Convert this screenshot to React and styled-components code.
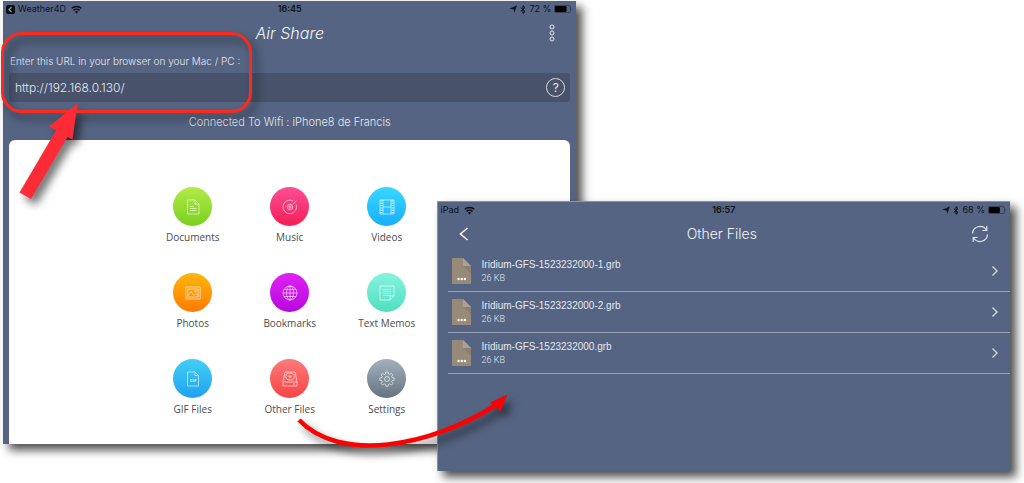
import React, { useState } from 'react';
import styled, { createGlobalStyle } from 'styled-components';

const files = [
  { name: 'Iridium-GFS-1523232000-1.grb', size: '26 KB' },
  { name: 'Iridium-GFS-1523232000-2.grb', size: '26 KB' },
  { name: 'Iridium-GFS-1523232000.grb', size: '26 KB' },
];

const DocumentIcon = () => (
  <Glyph viewBox="0 0 16 16">
    <path d="M2.500 1h7.500l4 4v10h-11.500z" />
    <path d="M10 1v4h4M5 7.500h3.500M5 9.500h6.500M5 11.500h6.500" />
  </Glyph>
);

const MusicIcon = () => (
  <Glyph viewBox="0 0 16 16">
    <path d="M14.200 5.500A6.800 6.800 0 1 1 11.200 2" />
    <circle cx="8" cy="8" r="2.800" />
    <circle cx="8" cy="8" r="1.200" />
    <path d="M11 5L14.500 1.800" />
  </Glyph>
);

const VideoIcon = () => (
  <Glyph viewBox="0 0 16 16">
    <path d="M1 1h14v14h-14zM4 1v14M12 1v14M4 8h8" />
    <path d="M2.500 1.500v13M13.500 1.500v13" strokeWidth="2" strokeDasharray="1 1.300" />
  </Glyph>
);

const PhotoIcon = () => (
  <Glyph viewBox="0 0 16 16">
    <path d="M.8 2h14.400v12h-14.400zM2.800 4h10.400v8h-10.400z" />
    <path d="M3 10.500l3-4 3 4 2-2 2 2" />
    <circle cx="10.500" cy="6" r=".8" />
  </Glyph>
);

const GlobeIcon = () => (
  <Glyph viewBox="0 0 16 16">
    <circle cx="8" cy="8" r="7" />
    <ellipse cx="8" cy="8" rx="3.500" ry="7" />
    <path d="M8 1v14M1 8h14M2 4.500h12M2 11.500h12" />
  </Glyph>
);

const MemoIcon = () => (
  <Glyph viewBox="0 0 16 16">
    <path d="M1 1h14v10l-4 4h-10zM15 11h-4v4" />
    <path d="M4 4.500h8M4 6.500h8M4 8.500h8M4 10.500h8" />
  </Glyph>
);

const GifIcon = () => (
  <Glyph viewBox="0 0 16 16">
    <path d="M2.500 1h7.500l3.500 3.500v10.500h-11zM10 1v3.500h3.500" />
    <path d="M7.500 8.500H5.700v2h1.600V9.600M8.700 8.200V10.900M10 10.900V8.500h1.600M10 9.700h1.300" />
  </Glyph>
);

const DriveIcon = () => (
  <Glyph viewBox="0 0 16 16">
    <path d="M3 1h10l2 9.500v4.500h-14v-4.500zM1 11h14M11 13h2" />
    <ellipse cx="8" cy="5.500" rx="4.200" ry="3.500" />
    <path d="M6.500 5h3l-1.500 1.500z" />
  </Glyph>
);

const GearIcon = () => (
  <Glyph viewBox="0 0 16 16">
    <circle cx="8" cy="8" r="2.500" />
    <path d="M6.900 1h2.200l.4 2 1.200.5 1.700-1.200 1.500 1.500-1.200 1.700.5 1.200 2 .3v2.200l-2 .4-.5 1.200 1.200 1.700-1.500 1.500-1.700-1.200-1.200.5-.4 2H6.900l-.4-2-1.200-.5-1.700 1.200-1.500-1.500 1.200-1.700-.5-1.200-2-.4V7l2-.3.5-1.200-1.200-1.700 1.500-1.500 1.700 1.200 1.200-.5z" />
  </Glyph>
);

const tiles = [
  { label: 'Documents', Icon: DocumentIcon, from: '#b4ea48', to: '#78d01f' },
  { label: 'Music', Icon: MusicIcon, from: '#fd4d96', to: '#f51f55' },
  { label: 'Videos', Icon: VideoIcon, from: '#38d8ff', to: '#18aefc' },
  { label: 'Photos', Icon: PhotoIcon, from: '#ffb70a', to: '#ff7a02' },
  { label: 'Bookmarks', Icon: GlobeIcon, from: '#df22f4', to: '#b808dc' },
  { label: 'Text Memos', Icon: MemoIcon, from: '#86f3df', to: '#4fdfbe' },
  { label: 'GIF Files', Icon: GifIcon, from: '#43cff8', to: '#1fa0f0' },
  { label: 'Other Files', Icon: DriveIcon, from: '#fd7a7a', to: '#f94444' },
  { label: 'Settings', Icon: GearIcon, from: '#a3b0bd', to: '#667482' },
];

function StatusBar({ carrier, backTo, time, battery }) {
  return (
    <Status>
      <StatusSide>
        {backTo && (
          <svg width="9" height="9" viewBox="0 0 9 9">
            <rect width="9" height="9" rx="2" fill="#0a0c10" />
            <path d="M5.500 2L3 4.500 5.500 7" fill="none" stroke="#8e9ab5" strokeWidth="1.200" />
          </svg>
        )}
        <Carrier>{backTo || carrier}</Carrier>
        <svg width="11" height="9" viewBox="0 0 11 9" fill="none" stroke="#0a0c10" strokeWidth="1.500">
          <path d="M.7 3.300a7 7 0 0 1 9.600 0M2.500 5.400a4.400 4.400 0 0 1 6 0" />
          <path d="M5.500 8.500L3.900 6.800a2.300 2.300 0 0 1 3.200 0z" fill="#0a0c10" stroke="none" />
        </svg>
      </StatusSide>
      <Clock>{time}</Clock>
      <StatusSide $end>
        <svg width="8" height="8" viewBox="0 0 8 8">
          <path d="M8 .3L5.400 7.800 4.500 4.400.3 3.800z" fill="#141822" />
        </svg>
        <svg width="6" height="9" viewBox="0 0 6 9" fill="none" stroke="#0a0c10">
          <path d="M.8 2.500l4.200 4L3 8.300V.7l2 1.800-4.200 4" />
        </svg>
        <span>{battery} %</span>
        <svg width="19" height="8" viewBox="0 0 19 8">
          <rect x=".5" y=".5" width="16" height="7" rx="1.500" fill="none" stroke="#39445a" />
          <rect x="1" y="1" width={(battery / 100) * 16} height="6" rx="1" fill="#000" />
          <path d="M17.500 2.500q1.500 1.500 0 3z" fill="#39445a" />
        </svg>
      </StatusSide>
    </Status>
  );
}

function AirShare() {
  const [url, setUrl] = useState('http://192.168.0.130/');

  return (
    <ShareWindow>
      <StatusBar backTo="Weather4D" time="16:45" battery={72} />
      <NavBar>
        <span />
        <Title $italic>Air Share</Title>
        <IconButton aria-label="Menu">
          <svg width="8" height="18" viewBox="0 0 8 18" fill="none" stroke="#e2e6ee">
            <circle cx="4" cy="3" r="2" />
            <circle cx="4" cy="9" r="2" />
            <circle cx="4" cy="15" r="2" />
          </svg>
        </IconButton>
      </NavBar>
      <UrlLabel htmlFor="url">Enter this URL in your browser on your Mac / PC :</UrlLabel>
      <UrlField>
        <UrlInput id="url" value={url} onChange={(e) => setUrl(e.target.value)} />
        <HelpButton aria-label="Help">?</HelpButton>
      </UrlField>
      <WifiName>Connected To Wifi : iPhone8 de Francis</WifiName>
      <Panel>
        {tiles.map(({ label, Icon, from, to }) => (
          <Tile key={label}>
            <Disc $from={from} $to={to}>
              <Icon />
            </Disc>
            {label}
          </Tile>
        ))}
      </Panel>
    </ShareWindow>
  );
}

function OtherFiles() {
  return (
    <FilesWindow>
      <StatusBar carrier="iPad" time="16:57" battery={68} />
      <NavBar>
        <IconButton aria-label="Back">
          <svg width="10" height="14" viewBox="0 0 10 14" fill="none" stroke="#fff" strokeWidth="1.500">
            <path d="M8.500 1L1.500 7l7 6" />
          </svg>
        </IconButton>
        <Title>Other Files</Title>
        <IconButton aria-label="Refresh">
          <svg width="18" height="18" viewBox="0 0 18 18" fill="none" stroke="#e2e6ee" strokeWidth="1.200">
            <path d="M1.500 8.500A7.500 7.500 0 0 1 15.300 5M16.500 9.500A7.500 7.500 0 0 1 2.700 13" />
            <path d="M15.800 1v4.500h-4.500M2.200 17v-4.500h4.500" />
          </svg>
        </IconButton>
      </NavBar>
      <FileList>
        {files.map(({ name, size }) => (
          <FileItem key={name}>
            <FileRow>
              <svg width="20" height="26" viewBox="0 0 20 26">
                <path d="M0 0h11l8 8v18H0z" fill="#988a79" />
                <path d="M11 8h8v8z" fill="#8b7f72" />
                <path d="M11 0l8 8h-8z" fill="#aca095" />
                <g fill="#fff">
                  <circle cx="6.500" cy="21" r="1.200" />
                  <circle cx="9.700" cy="21" r="1.200" />
                  <circle cx="12.900" cy="21" r="1.200" />
                </g>
              </svg>
              <FileText>
                <FileName>{name}</FileName>
                <FileSize>{size}</FileSize>
              </FileText>
              <svg width="8" height="12" viewBox="0 0 8 12" fill="none" stroke="#d3d6dc" strokeWidth="1.400">
                <path d="M1.500 1.500L6 6l-4.500 4.500" />
              </svg>
            </FileRow>
          </FileItem>
        ))}
      </FileList>
    </FilesWindow>
  );
}

function App() {
  return (
    <Desktop>
      <GlobalStyle />
      <AirShare />
      <OtherFiles />
      <Annotations width="1024" height="483" viewBox="0 0 1024 483">
        <rect x="2.500" y="33.500" width="248" height="78" rx="19" fill="none" stroke="#fb2a1c" strokeWidth="3" />
        <path d="M77.500 103.500L49 126.500l7 4L19.500 192.500l11.500 6.500L67.500 137l5 2.500z" fill="#fd2b35" />
        <path d="M299 420C340 463 430 447 496 405" fill="none" stroke="#f00" strokeWidth="4.500" />
        <path d="M507.500 394.500l-17.500 8 10.500 9z" fill="#f00" />
      </Annotations>
    </Desktop>
  );
}

const GlobalStyle = createGlobalStyle`
  * {
    box-sizing: border-box;
  }
  body {
    margin: 0;
    background: #fff;
    font-family: Inter, 'Liberation Sans', sans-serif;
    overflow: hidden;
  }
  button, input {
    border: 0;
    padding: 0;
    background: none;
    color: inherit;
    font: inherit;
  }
  svg {
    display: block;
    flex: none;
  }
`;

const Desktop = styled.main`
  position: relative;
  min-height: 100vh;
  padding: 1px 3px;
`;

const Window = styled.section`
  width: 56vw;
  background: #556482;
  color: #e4e8ef;
  font-weight: 300;
  box-shadow: 6px 6px 9px rgba(0, 0, 0, 0.7);
`;

const ShareWindow = styled(Window)`
  padding: 0 6px;
`;

const FilesWindow = styled(Window)`
  position: absolute;
  top: 201px;
  right: 14px;
  padding-bottom: 97px;
  border-top: 1px solid #8792ab;
  border-left: 1px solid #8792ab;
`;

const Annotations = styled.svg`
  position: absolute;
  top: 0;
  left: 0;
  pointer-events: none;
  filter: drop-shadow(5px 6px 4px rgba(0, 0, 0, 0.55));
`;

const Status = styled.div`
  display: grid;
  grid-template-columns: 1fr auto 1fr;
  align-items: center;
  height: 16px;
  padding: 0 3px;
  color: #0f131b;
  font-size: 9px;
  font-weight: 400;
  line-height: 16px;

  ${ShareWindow} & {
    margin: 0 -6px;
  }
`;

const StatusSide = styled.div`
  display: flex;
  align-items: center;
  justify-content: ${({ $end }) => ($end ? 'flex-end' : 'flex-start')};
  gap: 3px;
`;

const Carrier = styled.span`
  margin-right: 2px;
`;

const Clock = styled.span`
  font-weight: 600;
`;

const NavBar = styled.header`
  display: grid;
  grid-template-columns: 24px 1fr 24px;
  align-items: center;
  height: 32px;
  padding: 0 6px;

  ${FilesWindow} & {
    padding: 0 18px 0 14px;
  }
`;

const Title = styled.h1`
  margin: 0;
  font-size: ${({ $italic }) => ($italic ? 16 : 14)}px;
  font-weight: 300;
  font-style: ${({ $italic }) => ($italic ? 'italic' : 'normal')};
  line-height: 24px;
  text-align: center;
  color: #f2f4f8;
`;

const IconButton = styled.button`
  display: flex;
  align-items: center;
  justify-content: center;
  height: 24px;
`;

const UrlLabel = styled.label`
  display: block;
  padding: 4px 1px;
  font-size: 10px;
  line-height: 16px;
`;

const UrlField = styled.div`
  display: flex;
  align-items: center;
  height: 29px;
  padding: 0 5px 0 6px;
  border-radius: 3px;
  background: #48536b;
`;

const UrlInput = styled.input`
  flex: 1;
  min-width: 0;
  font-size: 12px;
  line-height: 16px;
  outline: none;
`;

const HelpButton = styled.button`
  width: 19px;
  height: 19px;
  border: 1px solid #d5dae3;
  border-radius: 50%;
  font-size: 12px;
  font-weight: 400;
  line-height: 16px;
`;

const WifiName = styled.p`
  margin: 0;
  padding: 12px 0 10px;
  font-size: 11px;
  line-height: 16px;
  text-align: center;
`;

const Panel = styled.div`
  display: grid;
  grid-template-columns: repeat(3, 97px);
  justify-content: center;
  row-gap: 28px;
  padding: 47px 0 27px;
  border-radius: 6px 6px 0 0;
  background: #fff;
`;

const Tile = styled.button`
  display: flex;
  flex-direction: column;
  align-items: center;
  gap: 3px;
  color: #4c4c4c;
  font-family: 'Open Sans', sans-serif;
  font-size: 10px;
  font-weight: 400;
  line-height: 16px;
`;

const Disc = styled.span`
  display: flex;
  align-items: center;
  justify-content: center;
  width: 39px;
  height: 39px;
  border-radius: 50%;
  background: linear-gradient(${({ $from }) => $from}, ${({ $to }) => $to});
`;

const Glyph = styled.svg`
  width: 16px;
  height: 16px;
  fill: none;
  stroke: rgba(255, 255, 255, 0.75);
  stroke-width: 0.8;
`;

const FileList = styled.ul`
  margin: 0;
  padding: 1px 0 0 10px;
  list-style: none;
`;

const FileItem = styled.li`
  border-bottom: 1px solid #98a1b4;
`;

const FileRow = styled.button`
  display: flex;
  align-items: center;
  gap: 10px;
  width: 100%;
  height: 40px;
  padding: 0 11px 0 4px;
  text-align: left;
`;

const FileText = styled.span`
  display: flex;
  flex: 1;
  flex-direction: column;
`;

const FileName = styled.span`
  font-family: 'Liberation Sans', Arial, sans-serif;
  font-size: 10px;
  line-height: 14px;
`;

const FileSize = styled.span`
  font-family: Roboto, sans-serif;
  font-size: 9px;
  line-height: 12px;
`;

export default App;
